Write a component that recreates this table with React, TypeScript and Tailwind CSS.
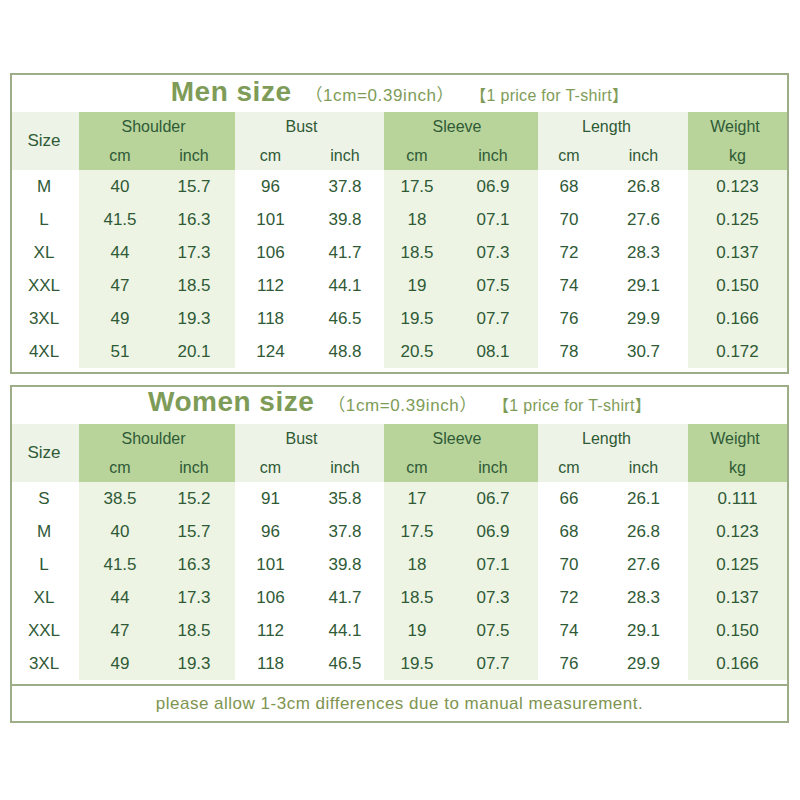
const menRows = [
  ["M", "40", "15.7", "96", "37.8", "17.5", "06.9", "68", "26.8", "0.123"],
  ["L", "41.5", "16.3", "101", "39.8", "18", "07.1", "70", "27.6", "0.125"],
  ["XL", "44", "17.3", "106", "41.7", "18.5", "07.3", "72", "28.3", "0.137"],
  ["XXL", "47", "18.5", "112", "44.1", "19", "07.5", "74", "29.1", "0.150"],
  ["3XL", "49", "19.3", "118", "46.5", "19.5", "07.7", "76", "29.9", "0.166"],
  ["4XL", "51", "20.1", "124", "48.8", "20.5", "08.1", "78", "30.7", "0.172"],
];

const womenRows = [
  ["S", "38.5", "15.2", "91", "35.8", "17", "06.7", "66", "26.1", "0.111"],
  ["M", "40", "15.7", "96", "37.8", "17.5", "06.9", "68", "26.8", "0.123"],
  ["L", "41.5", "16.3", "101", "39.8", "18", "07.1", "70", "27.6", "0.125"],
  ["XL", "44", "17.3", "106", "41.7", "18.5", "07.3", "72", "28.3", "0.137"],
  ["XXL", "47", "18.5", "112", "44.1", "19", "07.5", "74", "29.1", "0.150"],
  ["3XL", "49", "19.3", "118", "46.5", "19.5", "07.7", "76", "29.9", "0.166"],
];

// light green under the green-headed columns, white elsewhere
const cellBg = [
  "bg-white",
  "bg-[#edf4e4]",
  "bg-[#edf4e4]",
  "bg-white",
  "bg-white",
  "bg-[#edf4e4]",
  "bg-[#edf4e4]",
  "bg-white",
  "bg-white",
  "bg-[#edf4e4]",
];

// the text in the picture sits a little off the cell centres
const cellPad = [
  "pr-[3px]",
  "pl-[4px]",
  "pr-[4px]",
  "pr-[4px]",
  "pr-[4px]",
  "pr-[11px]",
  "pr-[13px]",
  "pr-[13px]",
  "pr-[14px]",
  "",
];

const green = "bg-[#b8d49b]";
const light = "bg-[#eef3e7]";

function SizeTable({ rows }: { rows: string[][] }) {
  return (
    <div className="grid grid-cols-[67px_78px_78px_75px_74px_77px_77px_75px_75px_99px] text-[#2f5a36]">
      <div className={`row-span-2 flex items-center justify-center text-[17px] pr-[3px] ${light}`}>
        Size
      </div>
      <div className={`col-span-2 flex h-[30px] items-center justify-center pr-[7px] text-[16px] ${green}`}>
        Shoulder
      </div>
      <div className={`col-span-2 flex h-[30px] items-center justify-center pr-[16px] text-[16px] ${light}`}>
        Bust
      </div>
      <div className={`col-span-2 flex h-[30px] items-center justify-center pr-[8px] text-[16px] ${green}`}>
        Sleeve
      </div>
      <div className={`col-span-2 flex h-[30px] items-center justify-center pr-[13px] text-[16px] ${light}`}>
        Length
      </div>
      <div className={`flex h-[30px] items-center justify-center pr-[5px] text-[16px] ${green}`}>
        Weight
      </div>

      <div className={`flex h-[28px] items-center justify-center pl-[4px] text-[16px] ${green}`}>cm</div>
      <div className={`flex h-[28px] items-center justify-center pr-[4px] text-[16px] ${green}`}>inch</div>
      <div className={`flex h-[28px] items-center justify-center pr-[4px] text-[16px] ${light}`}>cm</div>
      <div className={`flex h-[28px] items-center justify-center pr-[4px] text-[16px] ${light}`}>inch</div>
      <div className={`flex h-[28px] items-center justify-center pr-[11px] text-[16px] ${green}`}>cm</div>
      <div className={`flex h-[28px] items-center justify-center pr-[13px] text-[16px] ${green}`}>inch</div>
      <div className={`flex h-[28px] items-center justify-center pr-[13px] text-[16px] ${light}`}>cm</div>
      <div className={`flex h-[28px] items-center justify-center pr-[14px] text-[16px] ${light}`}>inch</div>
      <div className={`flex h-[28px] items-center justify-center text-[16px] ${green}`}>kg</div>

      {rows.map((row) =>
        row.map((v, i) => (
          <div
            key={row[0] + i}
            className={`flex h-[33px] items-center justify-center text-[17px] ${cellBg[i]} ${cellPad[i]}`}
          >
            {v}
          </div>
        ))
      )}
    </div>
  );
}

function Title({ label, top }: { label: string; top: string }) {
  return (
    <div className={`flex h-[37px] items-baseline justify-center leading-none text-[#7e9c58] ${top}`}>
      <span className="text-[28px] font-bold tracking-[0.5px]">{label}</span>
      <span className="ml-[14px] text-[17px] tracking-[0.6px]">（1cm=0.39inch）</span>
      <span className="ml-[16px] text-[16px] font-medium tracking-[0.3px]">【1 price for T-shirt】</span>
    </div>
  );
}

export default function App() {
  return (
    <div className="h-[800px] w-[800px] bg-white pl-[10px] pt-[73px] font-['Liberation_Sans','Noto_Sans_CJK_SC',sans-serif]">
      <div className="w-[779px] border-2 border-[#9cad88] pb-[4px]">
        <Title label="Men size" top="pt-[3px]" />
        <SizeTable rows={menRows} />
      </div>

      <div className="mt-[11px] w-[779px] border-2 border-[#9cad88]">
        <div className="pb-[4px]">
          <Title label="Women size" top="pt-[1px] h-[36px]" />
          <SizeTable rows={womenRows} />
        </div>
        <div className="flex h-[37px] items-center justify-center border-t-2 border-[#9cad88] text-[17px] tracking-[0.5px] text-[#7e9450]">
          please allow 1-3cm differences due to manual measurement.
        </div>
      </div>
    </div>
  );
}
